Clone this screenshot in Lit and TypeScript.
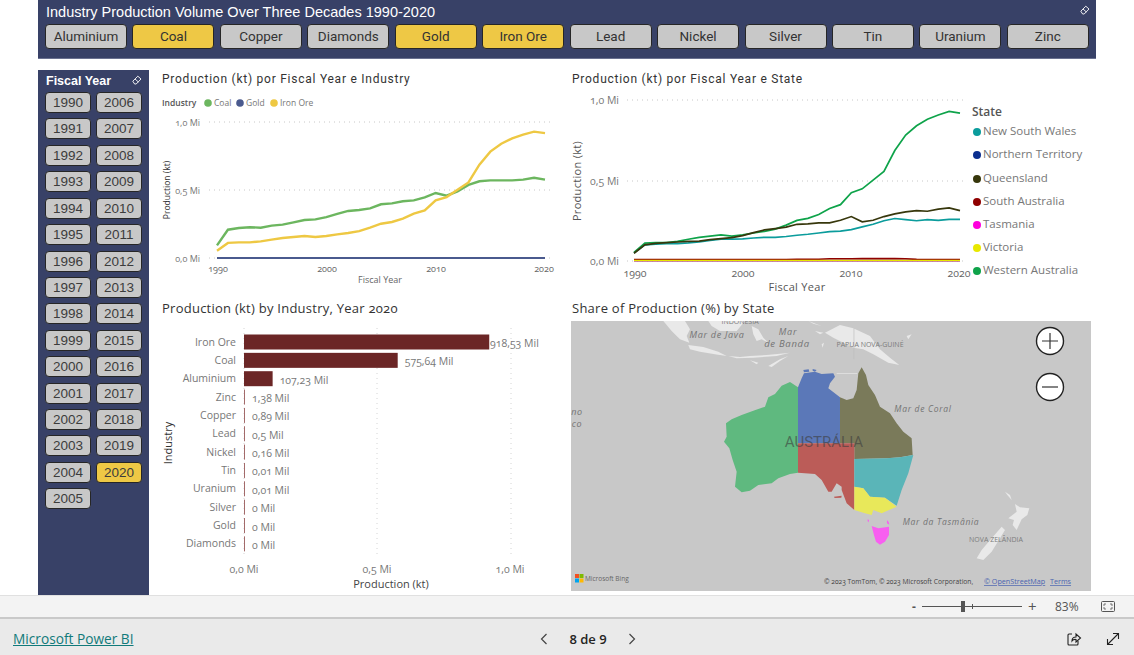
import { LitElement, html, css, svg } from 'lit';
import { customElement, state } from 'lit/decorators.js';

const INDUSTRIES = ['Aluminium', 'Coal', 'Copper', 'Diamonds', 'Gold', 'Iron Ore', 'Lead', 'Nickel', 'Silver', 'Tin', 'Uranium', 'Zinc'];

// production per year from 1990, in kt
const COAL = [93, 208, 221, 226, 223, 238, 245, 262, 279, 284, 301, 324, 346, 353, 365, 395, 402, 417, 424, 446, 478, 458, 490, 537, 564, 571, 571, 571, 576, 590, 576];
const IRON = [54, 111, 115, 115, 122, 135, 147, 154, 162, 154, 162, 174, 184, 198, 223, 252, 265, 289, 326, 350, 424, 448, 502, 556, 686, 782, 840, 880, 907, 929, 918];
const QLD = [48, 100, 110, 114, 118, 122, 124, 133, 139, 145, 158, 176, 193, 201, 210, 228, 230, 237, 237, 253, 276, 243, 253, 276, 293, 305, 313, 309, 322, 330, 313];
const NSW = [50, 100, 105, 108, 108, 112, 118, 128, 135, 136, 138, 143, 147, 147, 152, 160, 166, 174, 182, 186, 195, 212, 228, 250, 264, 257, 250, 257, 252, 258, 258];
const SA = [8, 8, 8, 8, 8, 8, 8, 8, 8, 8, 8, 8, 8, 9, 9, 10, 10, 11, 14, 14, 14, 15, 15, 15, 15, 14, 10, 9, 8, 8, 8];
const FLAT = COAL.map(() => 3);

const STATES = [
  { name: 'New South Wales', color: '#0b9c9c', y: 131 },
  { name: 'Northern Territory', color: '#0b2f8f', y: 154 },
  { name: 'Queensland', color: '#37370c', y: 178 },
  { name: 'South Australia', color: '#8f0000', y: 201 },
  { name: 'Tasmania', color: '#ff00dd', y: 224 },
  { name: 'Victoria', color: '#e8e800', y: 247 },
  { name: 'Western Australia', color: '#0ea34a', y: 270 },
];

const BARS: [string, number, string][] = [
  ['Iron Ore', 918.53, '918,53 Mil'],
  ['Coal', 575.64, '575,64 Mil'],
  ['Aluminium', 107.23, '107,23 Mil'],
  ['Zinc', 1.38, '1,38 Mil'],
  ['Copper', 0.89, '0,89 Mil'],
  ['Lead', 0.5, '0,5 Mil'],
  ['Nickel', 0.16, '0,16 Mil'],
  ['Tin', 0.01, '0,01 Mil'],
  ['Uranium', 0.01, '0,01 Mil'],
  ['Silver', 0, '0 Mil'],
  ['Gold', 0, '0 Mil'],
  ['Diamonds', 0, '0 Mil'],
];

// state shapes, in a 3x space that starts at 700,320 on the page
const SHAPES = [
  { fill: '#5fb97f', d: 'M294 202 270 186 245 197 225 222 205 232 195 260 160 272 125 285 95 298 78 310 80 350 72 365 88 385 98 420 110 455 105 500 125 517 150 512 175 495 215 490 235 475 270 462 294 458Z' },
  { fill: '#5b78b8', d: 'M294 202 305 175 312 160 345 155 365 162 400 160 405 170 390 190 385 205 420 232 420 370 294 370Z' },
  { fill: '#5b78b8', d: 'M310 150 326 148 328 155 312 157ZM338 147 350 150 345 155 338 152Z' },
  { fill: '#7a7a5a', d: 'M420 232 440 240 460 235 470 210 475 160 485 142 498 165 505 195 525 225 540 260 570 280 590 310 610 335 635 355 638 405 600 412 560 415 463 417 463 370 420 370Z' },
  { fill: '#bb5c58', d: 'M294 370 463 370 463 570 440 550 425 510 425 500 410 490 395 515 385 515 365 480 345 462 294 458Z' },
  { fill: '#bb5c58', d: 'M402 530 425 527 424 533 404 534Z' },
  { fill: '#5ab5b8', d: 'M463 417 560 415 600 412 640 405 625 460 605 510 590 557 555 533 510 530 490 505 463 500Z' },
  { fill: '#e8e85a', d: 'M463 500 490 505 510 530 555 533 590 560 545 580 520 570 515 585 495 580 463 570Z' },
  { fill: '#f85ff0', d: 'M515 618 535 625 567 620 567 645 555 665 540 674 528 665 522 645Z' },
  { fill: '#f85ff0', d: 'M503 598 507 600 506 607 503 604ZM561 600 566 606 568 614 561 610Z' },
];

// Indonesia and Papua, in a 3x space that starts at 640,321
const LAND = [
  'M70 0 135 0 150 25 140 45 148 65 120 55 95 30Z',
  'M145 72 190 78 235 92 260 105 225 100 180 92 150 85Z',
  'M265 105 300 108 330 105 380 102 420 98 450 95 410 105 340 110 290 112Z',
  'M330 118 355 125 350 130ZM385 135 420 115 445 105 420 120 395 138Z',
  'M205 0 315 0 305 12 290 30 240 30 215 15Z',
  'M335 15 355 25 370 50 385 65 365 55 350 60 340 40Z',
  'M505 0 545 15 520 8ZM525 30 550 35 540 40ZM545 70 552 65 548 80Z',
  'M555 35 600 12 640 22 690 45 720 85 750 110 778 132 745 125 700 100 670 85 640 80 610 65 580 50Z',
  'M800 45 815 40 805 55Z',
  'M590 156H652V158H590Z',
];

function linePoints(data: number[], x0: number, x1: number, y0: number, perKt: number) {
  return data.map((v, i) => `${x0 + ((x1 - x0) * i) / (data.length - 1)},${y0 - v * perKt}`).join(' ');
}

@customElement('app-root')
export class AppRoot extends LitElement {
  @state() selected = ['Coal', 'Gold', 'Iron Ore'];
  @state() year = 2020;

  static styles = css`
    :host {
      display: flex;
      flex-direction: column;
      width: 1134px;
      height: 655px;
      overflow: hidden;
      background: #fff;
      font-family: 'Open Sans', 'Liberation Sans', sans-serif;
    }
    .header {
      flex: none;
      margin-left: 38px;
      width: 1058px;
      height: 59px;
      box-sizing: border-box;
      padding: 3px 7px 0;
      background: #384167;
      border-bottom: 1px solid #6a7190;
      position: relative;
    }
    .report-title {
      font: 14.5px/18px 'Liberation Sans', sans-serif;
      color: #fff;
      padding-left: 1px;
      height: 21px;
    }
    .industries {
      display: grid;
      grid-template-columns: repeat(12, 82px);
      column-gap: 5.45px;
    }
    .slicer-btn {
      box-sizing: border-box;
      height: 25px;
      padding: 0 0 2px;
      border: 1px solid #262626;
      border-radius: 4px;
      background: #c8c8c8;
      color: #333;
      font: 13.5px Roboto, sans-serif;
      text-align: center;
    }
    .slicer-btn.on {
      background: #eec845;
    }
    .eraser {
      position: absolute;
      width: 10px;
      height: 10px;
    }
    .header .eraser {
      right: 6px;
      top: 5px;
    }
    .body {
      flex: none;
      height: 525px;
      display: flex;
      margin-top: 11px;
      margin-left: 38px;
    }
    .sidebar {
      width: 111px;
      height: 525px;
      box-sizing: border-box;
      padding: 3px 7px 0;
      background: #384167;
      position: relative;
    }
    .sidebar .eraser {
      right: 7px;
      top: 5px;
    }
    .side-title {
      font: bold 12.5px/16px 'Liberation Sans', sans-serif;
      color: #fff;
      padding-left: 1px;
      height: 19px;
    }
    .years {
      display: grid;
      grid-template-rows: repeat(16, 21px);
      grid-template-columns: 46px 46px;
      grid-auto-flow: column;
      row-gap: 5.43px;
      column-gap: 5px;
    }
    .years .slicer-btn {
      height: 21px;
      padding: 0;
      font: 13.5px 'Liberation Sans', sans-serif;
      color: #3c3c3c;
    }
    .charts {
      margin-left: 13px;
      display: grid;
      grid-template-columns: 409px 520px;
      grid-template-rows: 229px 296px;
    }
    .cell {
      display: flex;
      flex-direction: column;
      min-width: 0;
    }
    .title {
      height: 18px;
      font: 400 12px/18px Roboto, sans-serif;
      letter-spacing: 0.75px;
      color: #333;
      white-space: nowrap;
    }
    .title.plain {
      font: 13px/18px 'Open Sans', sans-serif;
      font-variant-numeric: oldstyle-nums;
      letter-spacing: 0.25px;
    }
    .right .title {
      padding-left: 1px;
    }
    svg {
      display: block;
      overflow: visible;
    }
    svg text {
      font-family: 'Open Sans', sans-serif;
      font-variant-numeric: oldstyle-nums;
    }
    .map {
      margin-top: 4px;
      overflow: hidden;
    }
    .zoombar {
      flex: none;
      height: 21px;
      background: #f3f3f3;
      border-top: 1px solid #e0e0e0;
      border-bottom: 2px solid #c9c9c9;
      display: flex;
      align-items: center;
      justify-content: flex-end;
      color: #555;
      font-size: 12px;
    }
    .zoom-minus {
      font-weight: 700;
      width: 10px;
    }
    .slider {
      width: 100px;
      height: 1px;
      background: #555;
      position: relative;
      margin-right: 6px;
    }
    .slider .thumb {
      position: absolute;
      left: 39px;
      top: -5px;
      width: 4px;
      height: 11px;
      background: #555;
    }
    .slider .mid {
      position: absolute;
      left: 50px;
      top: -2px;
      width: 1px;
      height: 5px;
      background: #555;
    }
    .zoom-plus {
      width: 27px;
      font-size: 15px;
      line-height: 15px;
    }
    .zoom-pct {
      width: 36px;
    }
    .fit {
      width: 14px;
      height: 11px;
      margin: 0 19px 0 10px;
    }
    .footer {
      height: 36px;
      flex: none;
      box-sizing: border-box;
      background: #eaeaea;
      display: flex;
      align-items: center;
      padding: 3px 13px 0;
      position: relative;
    }
    .brand {
      color: #117a7a;
      font-size: 13.7px;
      text-decoration: underline;
      flex: 1;
    }
    .pager {
      position: absolute;
      left: 536px;
      width: 104px;
      display: flex;
      align-items: center;
      justify-content: space-between;
      font-size: 13px;
      font-weight: 600;
      color: #252423;
    }
    .chev {
      width: 16px;
      height: 16px;
    }
    .actions {
      display: flex;
      gap: 23px;
    }
    .actions svg {
      width: 16px;
      height: 16px;
    }
  `;

  private eraser() {
    return html`<svg class="eraser" viewBox="0 0 10 10" fill="none" stroke="#fff" stroke-width="0.9">
      <path d="M0.8 6.2 5.8 1.2 9 4 4.2 9H2.6Z" />
      <path d="M3 4 6.4 7" />
    </svg>`;
  }

  private lineChart() {
    const yearTick = (label: string, x: number) => svg`<text x=${x} y="272" font-size="9" text-anchor="middle" fill="#666">${label}</text>`;
    const grid = (y: number, label: string) => svg`
      <line x1="209" x2="552" y1=${y} y2=${y} stroke="#c8c8c8" stroke-dasharray="1 4" />
      <text x="200" y=${y + 3.5} font-size="9" text-anchor="end" fill="#777">${label}</text>`;
    return html`<svg width="409" height="211" viewBox="162 88 409 211">
      <text x="162" y="106" font-size="8.5" font-weight="600" fill="#555">Industry</text>
      <circle cx="208" cy="103" r="3.8" fill="#6cb65f" />
      <text x="214" y="106" font-size="8.5" fill="#777">Coal</text>
      <circle cx="240" cy="103" r="3.8" fill="#4a5a8e" />
      <text x="246" y="106" font-size="8.5" fill="#777">Gold</text>
      <circle cx="274" cy="103" r="3.8" fill="#eec843" />
      <text x="280" y="106" font-size="8.5" fill="#777">Iron Ore</text>
      ${grid(122, '1,0 Mi')} ${grid(190, '0,5 Mi')} ${grid(258, '0,0 Mi')}
      <polyline points=${linePoints(FLAT.map(() => 0), 217, 545, 258, 0.136)} fill="none" stroke="#4a5a8e" stroke-width="2.2" />
      <polyline points=${linePoints(COAL, 217, 545, 258, 0.136)} fill="none" stroke="#6cb65f" stroke-width="2.4" />
      <polyline points=${linePoints(IRON, 217, 545, 258, 0.136)} fill="none" stroke="#eec843" stroke-width="2.4" />
      ${yearTick('1990', 218)} ${yearTick('2000', 327)} ${yearTick('2010', 436)} ${yearTick('2020', 544)}
      <text x="380" y="283" font-size="9" text-anchor="middle" fill="#666">Fiscal Year</text>
      <text transform="translate(170 190) rotate(-90)" font-size="8.5" text-anchor="middle" fill="#333">Production (kt)</text>
    </svg>`;
  }

  private stateChart() {
    const yearTick = (label: string, x: number) => svg`<text x=${x} y="277" font-size="10.5" text-anchor="middle" fill="#666">${label}</text>`;
    const grid = (y: number, label: string) => svg`
      <line x1="627" x2="966" y1=${y} y2=${y} stroke="#c8c8c8" stroke-dasharray="1 4" />
      <text x="619" y=${y + 4} font-size="10.5" text-anchor="end" fill="#777">${label}</text>`;
    const line = (data: number[], color: string) =>
      svg`<polyline points=${linePoints(data, 634, 960, 261, 0.161)} fill="none" stroke=${color} stroke-width="1.7" />`;
    return html`<svg width="520" height="211" viewBox="571 88 520 211">
      ${grid(100, '1,0 Mi')} ${grid(181, '0,5 Mi')} ${grid(261, '0,0 Mi')}
      ${line(FLAT.map(() => 2), '#ff00dd')} ${line(FLAT.map(() => 3), '#0b2f8f')}
      ${line(SA, '#8f0000')} ${line(FLAT, '#e8e800')} ${line(NSW, '#0b9c9c')}
      ${line(IRON, '#0ea34a')} ${line(QLD, '#37370c')}
      ${yearTick('1990', 635)} ${yearTick('2000', 743)} ${yearTick('2010', 851)} ${yearTick('2020', 959)}
      <text x="797" y="291" font-size="11" font-weight="500" text-anchor="middle" fill="#555" letter-spacing="0.3">Fiscal Year</text>
      <text transform="translate(581 181) rotate(-90)" font-size="11" text-anchor="middle" fill="#555" letter-spacing="0.3">Production (kt)</text>
      <text x="972" y="116" font-size="12" font-weight="600" fill="#555">State</text>
      ${STATES.map(
        (s) => svg`<circle cx="977" cy=${s.y + 1} r="4" fill=${s.color} />
          <text x="983" y=${s.y + 4} font-size="11.5" fill="#777">${s.name}</text>`,
      )}
    </svg>`;
  }

  private barChart() {
    const perKt = 0.267;
    return html`<svg width="409" height="278" viewBox="162 317 409 278">
      ${[244, 377, 511].map((x) => svg`<line x1=${x} x2=${x} y1="328" y2="555" stroke="#d4d4d4" stroke-dasharray="1 4" />`)}
      ${BARS.map(([name, value, label], i) => {
        const cy = 342 + i * 18.35;
        const w = Math.max(value * perKt, 1);
        return svg`
          <text x="236" y=${cy + 3.5} font-size="10.5" text-anchor="end" fill="#777">${name}</text>
          <rect x="244" y=${cy - 7.5} width=${w} height="15" fill=${value > 50 ? '#6b2626' : '#a36a6a'} />
          <text x=${Math.min(244 + w + 7, 490)} y=${cy + 5} font-size="10.5" fill="#777">${label}</text>`;
      })}
      <text x="244" y="573" font-size="10.5" text-anchor="middle" fill="#777">0,0 Mi</text>
      <text x="377" y="573" font-size="10.5" text-anchor="middle" fill="#777">0,5 Mi</text>
      <text x="510" y="573" font-size="10.5" text-anchor="middle" fill="#777">1,0 Mi</text>
      <text x="391" y="588" font-size="11" text-anchor="middle" fill="#444">Production (kt)</text>
      <text transform="translate(172 443) rotate(-90)" font-size="11" text-anchor="middle" fill="#333">Industry</text>
    </svg>`;
  }

  private map() {
    const label = (x: number, y: number, text: string, size = 9) =>
      svg`<text x=${x} y=${y} font-size=${size} font-style="italic" fill="#737373" text-anchor="middle" letter-spacing="0.7">${text}</text>`;
    const caps = (x: number, y: number, text: string) =>
      svg`<text x=${x} y=${y} font-size="7" fill="#7c7c7c" text-anchor="middle">${text}</text>`;
    const zoomBtn = (cy: number, plus: boolean) => svg`
      <circle cx="1050" cy=${cy} r="13.5" fill="#fff" stroke="#222" stroke-width="1.4" />
      <path d=${plus ? `M1042 ${cy}H1058M1050 ${cy - 8}V${cy + 8}` : `M1042 ${cy}H1058`} stroke="#333" stroke-width="1.2" />`;
    return html`<svg class="map" width="520" height="270" viewBox="571 321 520 270">
      <rect x="571" y="321" width="520" height="270" fill="#c8c8c8" />
      <g transform="translate(640 321) scale(0.3333)" fill="#e9e9e9">
        ${LAND.map((d) => svg`<path d=${d} />`)}
        <path d="M641 22H643V115H641Z" fill="#bdbdbd" />
      </g>
      <g transform="translate(700 320) scale(0.3333)">
        ${SHAPES.map((s) => svg`<path d=${s.d} fill=${s.fill} />`)}
      </g>
      <g transform="translate(920 480) scale(0.3333)" fill="#e9e9e9">
        <path d="M285 72 300 82 328 85 322 105 305 118 290 150 278 135 282 120 265 115 290 95Z" />
        <path d="M255 35 270 45 275 60 262 45Z" />
        <path d="M245 140 255 150 240 175 215 215 190 240 170 235 185 210 215 175Z" />
      </g>
      ${caps(740, 324, 'INDONÉSIA')} ${label(717, 338, 'Mar de Java', 9)}
      ${label(788, 334.5, 'Mar', 9)} ${label(787, 346.5, 'de Banda', 9.5)}
      ${caps(870, 347, 'PAPUA NOVA-GUINÉ')} ${label(923, 412, 'Mar de Coral', 8.5)}
      ${label(941, 525, 'Mar da Tasmânia', 8.5)} ${caps(996, 542, 'NOVA ZELÂNDIA')}
      ${label(577, 415, 'no', 9)} ${label(577, 427, 'co', 9)}
      <text x="824" y="447" font-size="15" fill="#3c3c3c" fill-opacity="0.6" text-anchor="middle" style="font-family:Roboto,sans-serif">AUSTRÁLIA</text>
      ${zoomBtn(341, true)} ${zoomBtn(387, false)}
      <rect x="575" y="574" width="4" height="4" fill="#f25022" />
      <rect x="579.5" y="574" width="4" height="4" fill="#7fba00" />
      <rect x="575" y="578.5" width="4" height="4" fill="#00a4ef" />
      <rect x="579.5" y="578.5" width="4" height="4" fill="#ffb900" />
      <text x="585" y="581" font-size="6.5" fill="#666">Microsoft Bing</text>
      <text x="824" y="584" font-size="6.7" fill="#444">© 2023 TomTom, © 2023 Microsoft Corporation,</text>
      <text x="984" y="584" font-size="7.2" fill="#4a64b0" text-decoration="underline">© OpenStreetMap</text>
      <text x="1050" y="584" font-size="7.2" fill="#4a64b0" text-decoration="underline">Terms</text>
    </svg>`;
  }

  render() {
    const years = Array.from({ length: 31 }, (_, i) => 1990 + i);
    return html`
      <div class="header">
        <div class="report-title">Industry Production Volume Over Three Decades 1990-2020</div>
        ${this.eraser()}
        <div class="industries">
          ${INDUSTRIES.map((n) => html`<button class="slicer-btn ${this.selected.includes(n) ? 'on' : ''}">${n}</button>`)}
        </div>
      </div>
      <div class="body">
        <div class="sidebar">
          <div class="side-title">Fiscal Year</div>
          ${this.eraser()}
          <div class="years">
            ${years.map((y) => html`<button class="slicer-btn ${y === this.year ? 'on' : ''}">${y}</button>`)}
          </div>
        </div>
        <div class="charts">
          <div class="cell">
            <div class="title">Production (kt) por Fiscal Year e Industry</div>
            ${this.lineChart()}
          </div>
          <div class="cell right">
            <div class="title">Production (kt) por Fiscal Year e State</div>
            ${this.stateChart()}
          </div>
          <div class="cell">
            <div class="title plain">Production (kt) by Industry, Year 2020</div>
            ${this.barChart()}
          </div>
          <div class="cell right">
            <div class="title plain">Share of Production (%) by State</div>
            ${this.map()}
          </div>
        </div>
      </div>
      <div class="zoombar">
        <span class="zoom-minus">-</span>
        <div class="slider"><div class="thumb"></div><div class="mid"></div></div>
        <span class="zoom-plus">+</span>
        <span class="zoom-pct">83%</span>
        <svg class="fit" viewBox="0 0 14 11" fill="none" stroke="#555">
          <rect x="0.5" y="0.5" width="13" height="10" rx="1" />
          <path d="M3 5V3H5M9 3H11V5M11 6V8H9M5 8H3V6" stroke-width="0.8" />
        </svg>
      </div>
      <div class="footer">
        <span class="brand">Microsoft Power BI</span>
        <div class="pager">
          <svg class="chev" viewBox="0 0 16 16" fill="none" stroke="#444" stroke-width="1.2"><path d="M10.5 3 5.5 8 10.5 13" /></svg>
          <span>8 de 9</span>
          <svg class="chev" viewBox="0 0 16 16" fill="none" stroke="#444" stroke-width="1.2"><path d="M5.5 3 10.5 8 5.5 13" /></svg>
        </div>
        <div class="actions">
          <svg viewBox="0 0 16 16" fill="none" stroke="#222" stroke-width="1.1">
            <path d="M6 3H3Q2 3 2 4V13Q2 14 3 14H11Q12 14 12 13V10" />
            <path d="M6 10Q6 6 10 6V3L14.5 7 10 11V8.5Q7.5 8 6 10Z" />
          </svg>
          <svg viewBox="0 0 16 16" fill="none" stroke="#222" stroke-width="1.1">
            <path d="M2.5 13.5 13.5 2.5M8 2.5H13.5V8M2.5 8V13.5H8" />
          </svg>
        </div>
      </div>
    `;
  }
}
